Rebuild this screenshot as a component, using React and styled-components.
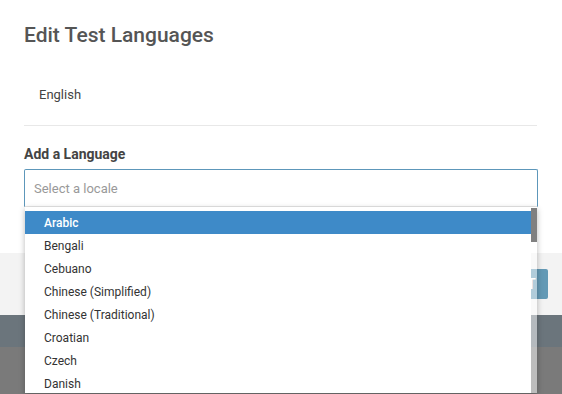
import React from "react";
import styled, { createGlobalStyle } from "styled-components";

const Global = createGlobalStyle`
  html, body { margin: 0; padding: 0; }
  body {
    background: #7a7a7a;
    font-family: Roboto, "Liberation Sans", Arial, sans-serif;
    overflow: hidden;
    width: 562px;
    height: 394px;
  }
  * { box-sizing: border-box; }
`;

const Page = styled.div`
  display: flex;
  flex-direction: column;
  width: 562px;
  height: 394px;
`;

const Modal = styled.div`
  display: flex;
  flex-direction: column;
  background: #fff;
`;

const Body = styled.div`
  display: flex;
  flex-direction: column;
  padding: 23px 24px 0 24px;
  height: 253px;
`;

const Title = styled.h2`
  margin: 0;
  font-size: 21px;
  line-height: 24px;
  font-weight: 500;
  color: #555;
`;

const LangList = styled.div`
  margin-top: 24px;
  border-bottom: 1px solid #e8e8e8;
  width: 513px;
`;

const LangRow = styled.div`
  padding: 16px 15px 22px 15px;
  font-size: 13px;
  line-height: 16px;
  color: #444;
`;

const Label = styled.div`
  margin-top: 20px;
  font-size: 14px;
  line-height: 16px;
  font-weight: 700;
  color: #444;
`;

const SelectWrap = styled.div`
  position: relative;
  margin-top: 7px;
  width: 514px;
`;

const SelectBox = styled.div`
  height: 38px;
  border: 1px solid #5d97ba;
  border-bottom-color: #e6e6e6;
  border-radius: 2px 2px 0 0;
  display: flex;
  align-items: center;
  padding: 0 9px;
  font-size: 13px;
  color: #999;
  background: #fff;
`;

const Menu = styled.div`
  position: absolute;
  left: 1px;
  top: 38px;
  width: 512px;
  height: 186px;
  overflow: hidden;
  display: flex;
  box-shadow: 0 2px 6px rgba(0, 0, 0, 0.28);
  z-index: 5;
`;

const List = styled.div`
  flex: 1;
  background: #fff;
  padding-top: 4px;
`;

const ScrollTrack = styled.div`
  width: 6px;
  background: rgba(255, 255, 255, 0.5);
  display: flex;
  flex-direction: column;
  padding-top: 1px;
`;

const ScrollThumb = styled.div`
  height: 34px;
  background: #808080;
`;

const Option = styled.div`
  height: 23px;
  display: flex;
  align-items: center;
  padding-left: 19px;
  font-size: 12px;
  color: ${(p) => (p.$active ? "#fff" : "#333")};
  background: ${(p) => (p.$active ? "#3e8ac8" : "#fff")};
  font-weight: ${(p) => (p.$active ? 500 : 400)};
`;

const Footer = styled.div`
  height: 62px;
  background: #f3f3f3;
  display: flex;
  align-items: center;
  justify-content: flex-end;
  padding-right: 14px;
`;

const Button = styled.button`
  height: 30px;
  padding: 0 12px;
  border: none;
  border-radius: 2px;
  background: #6399b5;
  color: #fff;
  font-family: Roboto, "Liberation Sans", Arial, sans-serif;
  font-size: 14px;
  font-weight: 500;
  letter-spacing: 0.3px;
  margin-top: -1px;
`;

const ShadowBand = styled.div`
  height: 32px;
  background: #6b757c;
`;

const languages = [
  "Arabic",
  "Bengali",
  "Cebuano",
  "Chinese (Simplified)",
  "Chinese (Traditional)",
  "Croatian",
  "Czech",
  "Danish",
  "Dutch",
];

export default function App() {
  return (
    <>
      <Global />
      <Page>
        <Modal>
          <Body>
            <Title>Edit Test Languages</Title>
            <LangList>
              <LangRow>English</LangRow>
            </LangList>
            <Label>Add a Language</Label>
            <SelectWrap>
              <SelectBox>Select a locale</SelectBox>
              <Menu>
                <List>
                  {languages.map((l, i) => (
                    <Option key={l} $active={i === 0}>
                      {l}
                    </Option>
                  ))}
                </List>
                <ScrollTrack>
                  <ScrollThumb />
                </ScrollTrack>
              </Menu>
            </SelectWrap>
          </Body>
          <Footer>
            <Button>SUBMIT</Button>
          </Footer>
        </Modal>
        <ShadowBand />
      </Page>
    </>
  );
}
